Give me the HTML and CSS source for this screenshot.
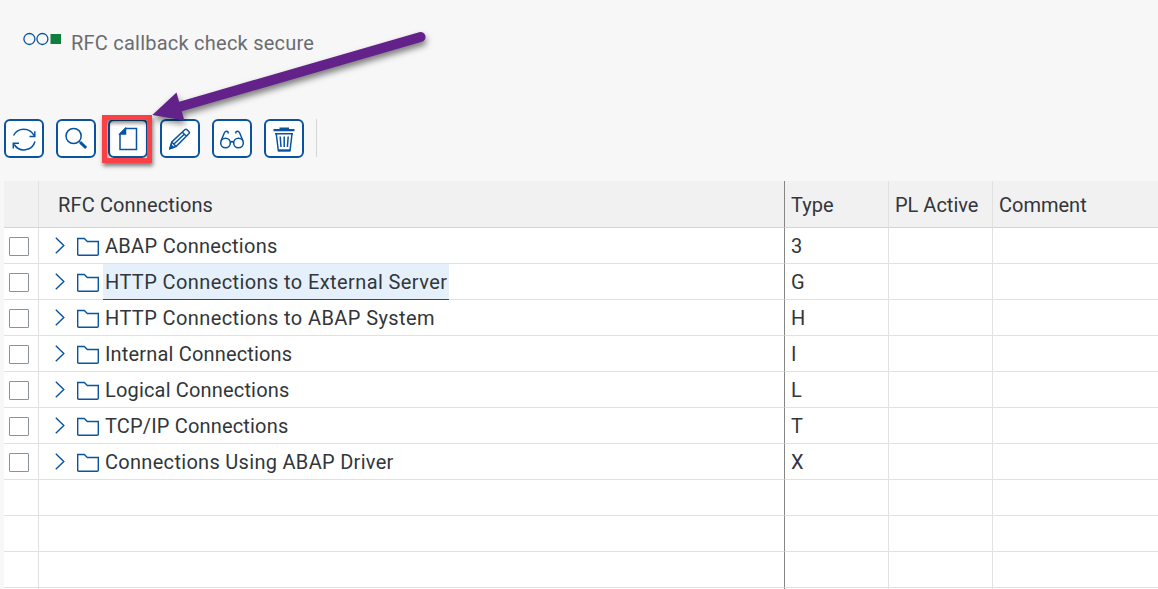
FILE: index.html
```html
<!DOCTYPE html>
<html lang="en">
<head>
<meta charset="utf-8">
<title>RFC Connections</title>
<link rel="stylesheet" href="styles.css">
</head>
<body>
<svg class="defs" aria-hidden="true">
  <symbol id="folder" viewBox="0 0 22 19"><path d="M.7 17.3V1.5H7.3L10.3 4.5H21.3V17.3Q21.3 18.3 20.3 18.3H1.7Q.7 18.3 .7 17.3Z"/></symbol>
  <symbol id="chevron" viewBox="0 0 10 17"><path d="M.8.8L8.8 8.5L.8 16.2"/></symbol>
</svg>
<header class="status">
  <svg class="lights" width="40" height="14" viewBox="0 0 40 14"><circle cx="6.4" cy="7" r="5.5"/><circle cx="19.4" cy="7" r="5.5"/><rect x="27.5" y="2" width="10.5" height="10"/></svg>
  <span class="status-text">RFC callback check secure</span>
</header>
<nav class="toolbar">
  <button class="tool" aria-label="Refresh"><svg viewBox="0 0 40 39"><path d="M9.5 16.5A11.5 11.5 0 0 1 30 16.5M30.8 12.3V17.5H25.5M31 22.5A11.5 11.5 0 0 1 10.2 25.5M9.3 29.5V24.2H15"/></svg></button>
  <button class="tool" aria-label="Find"><svg viewBox="0 0 40 39"><circle cx="17.6" cy="17" r="7.6"/><path d="M23 22L25 24"/><path class="thick" d="M24.3 23.3L30.2 29"/></svg></button>
  <button class="tool marked" aria-label="Create"><svg viewBox="0 0 40 39"><path d="M12 15L17.5 9.5H28.5V30.5H12Z"/><path class="solid" d="M12 15L17.5 9.5V15Z"/></svg></button>
  <button class="tool" aria-label="Change"><svg viewBox="0 0 40 39"><path d="M10 29.5L11.8 23L25 10.5Q26 9.8 27 10.8L29 12.8Q29.8 13.7 29 14.6L16 27.5ZM11.8 23L16 27.5M22.3 13.2L26.5 17.2M14.2 24.8L24.3 15.3"/><path class="solid" d="M10 29.5L11 26L13.4 28.4Z"/></svg></button>
  <button class="tool" aria-label="Display"><svg viewBox="0 0 40 39"><circle cx="13.5" cy="24" r="4.8"/><circle cx="26.5" cy="24" r="4.8"/><path d="M18.2 23.5Q20 21.8 21.8 23.5M9 22L12.3 14Q13.5 11.7 15.5 12.5Q16.4 13 16.2 14.5M31 22L27.7 14Q26.5 11.7 24.5 12.5Q23.6 13 23.8 14.5"/></svg></button>
  <button class="tool" aria-label="Delete"><svg viewBox="0 0 40 39"><path class="bar" d="M9.5 11.2H30.5M15.5 9.7H25"/><path d="M11 14.7H29M12.3 15L14.3 31.5H26L28 15M16.2 17.5L17 28M20.2 17.5V28M24.2 17.5L23.4 28"/><path class="bar" d="M14 31.5H26.3"/></svg></button>
  <span class="divider"></span>
</nav>
<main class="table">
  <div class="row head"><div></div><div class="title">RFC Connections</div><div class="type">Type</div><div class="active">PL Active</div><div class="comment">Comment</div></div>
  <div class="row"><div><i class="check"></i></div><div class="name"><svg class="chevron"><use href="#chevron"/></svg><svg class="folder"><use href="#folder"/></svg><span class="label">ABAP Connections</span></div><div class="type">3</div><div></div><div></div></div>
  <div class="row"><div><i class="check"></i></div><div class="name"><svg class="chevron"><use href="#chevron"/></svg><svg class="folder"><use href="#folder"/></svg><span class="label wide selected">HTTP Connections to External Server</span></div><div class="type">G</div><div></div><div></div></div>
  <div class="row"><div><i class="check"></i></div><div class="name"><svg class="chevron"><use href="#chevron"/></svg><svg class="folder"><use href="#folder"/></svg><span class="label wide">HTTP Connections to ABAP System</span></div><div class="type">H</div><div></div><div></div></div>
  <div class="row"><div><i class="check"></i></div><div class="name"><svg class="chevron"><use href="#chevron"/></svg><svg class="folder"><use href="#folder"/></svg><span class="label tight">Internal Connections</span></div><div class="type">I</div><div></div><div></div></div>
  <div class="row"><div><i class="check"></i></div><div class="name"><svg class="chevron"><use href="#chevron"/></svg><svg class="folder"><use href="#folder"/></svg><span class="label tight">Logical Connections</span></div><div class="type">L</div><div></div><div></div></div>
  <div class="row"><div><i class="check"></i></div><div class="name"><svg class="chevron"><use href="#chevron"/></svg><svg class="folder"><use href="#folder"/></svg><span class="label tight">TCP/IP Connections</span></div><div class="type">T</div><div></div><div></div></div>
  <div class="row"><div><i class="check"></i></div><div class="name"><svg class="chevron"><use href="#chevron"/></svg><svg class="folder"><use href="#folder"/></svg><span class="label">Connections Using ABAP Driver</span></div><div class="type">X</div><div></div><div></div></div>
  <div class="row"><div></div><div></div><div></div><div></div><div></div></div>
  <div class="row"><div></div><div></div><div></div><div></div><div></div></div>
  <div class="row"><div></div><div></div><div></div><div></div><div></div></div>
  <div class="row last"><div></div><div></div><div></div><div></div><div></div></div>
</main>
<svg class="arrow" width="300" height="110" viewBox="140 20 300 110" aria-hidden="true"><path class="shaft" d="M178 107.3L420.5 37"/><path class="tip" d="M152.3 115L176.5 92.5L184.3 120.5Z"/></svg>
</body>
</html>
```
FILE: styles.css
```css
*, *::after { box-sizing: border-box; }
body {
  margin: 0;
  height: 589px;
  overflow: hidden;
  position: relative;
  background: #f7f7f7;
  color: #32363a;
  font: 20px/24px Roboto, "Liberation Sans", sans-serif;
  letter-spacing: .3px;
}
.defs { display: none; }
.status {
  height: 119px;
  padding: 31px 0 0 23px;
  display: flex;
  align-items: flex-start;
  color: #6a6d70;
}
.lights { margin-top: 1px; fill: none; stroke: #0854a0; stroke-width: 1.3; }
.lights rect { fill: #107e3e; stroke: none; }
.status-text { margin-left: 8px; letter-spacing: .23px; }
.toolbar { height: 62px; padding-left: 4px; display: flex; gap: 12px; }
.tool {
  position: relative;
  width: 40px;
  height: 39px;
  padding: 0;
  border: 2px solid #0854a0;
  border-radius: 6px;
  background: #fff;
}
.tool svg {
  display: block;
  width: 40px;
  height: 39px;
  margin: -2px;
  fill: none;
  stroke: #0854a0;
  stroke-width: 1.5;
}
.tool .thick { stroke-width: 3; }
.tool .bar { stroke-width: 2.2; }
.tool .solid { fill: #0854a0; }
.marked::after {
  content: "";
  position: absolute;
  left: -8px;
  top: -6px;
  width: 50px;
  height: 48px;
  border: 5px solid #fa4145;
  box-shadow: 1px 3px 4px rgba(0, 0, 0, .5), inset 1px 3px 4px rgba(0, 0, 0, .5);
}
.divider { width: 1px; height: 38px; background: #d5d5d5; }
.table { margin-left: 4px; background: #fff; }
.row {
  height: 36px;
  display: grid;
  grid-template-columns: 35px 746px 104px 104px 1fr;
}
.row > div {
  border-right: 1px solid #e1e1e1;
  border-bottom: 1px solid #e1e1e1;
  display: flex;
  align-items: center;
}
.row > div:nth-child(2) { border-right-color: #858585; }
.row > div:last-child { border-right: 0; }
.head { height: 47px; background: #f1f1f1; letter-spacing: 0; }
.head > div { border-bottom-color: #d5d5d5; padding-top: 2px; }
.head > .title { padding-left: 19px; letter-spacing: .13px; }
.last { height: 1px; }
.last > div { border-bottom: 0; }
.row > .type, .row > .active, .row > .comment { padding-left: 6px; }
.check {
  width: 20px;
  height: 19px;
  margin: 2px 0 0 5px;
  border: 1px solid #89919a;
  border-radius: 1px;
}
.name { padding-left: 16px; }
.chevron { width: 10px; height: 17px; }
.folder { width: 22px; height: 19px; margin: 1px 0 0 12px; }
.chevron, .folder { fill: none; stroke: #0854a0; stroke-width: 1.4; flex: none; }
.label { height: 35px; line-height: 36px; margin-left: 4px; padding: 0 2px; }
.wide { letter-spacing: .4px; }
.tight { letter-spacing: .17px; }
.selected { height: 36px; margin-bottom: -1px; background: #e5f0fa; border-bottom: 1px solid #0854a0; }
.arrow { position: absolute; left: 140px; top: 20px; filter: drop-shadow(1px 4px 3px rgba(0, 0, 0, .5)); }
.shaft { stroke: #632289; stroke-width: 10; stroke-linecap: round; }
.tip { fill: #632289; }
```
